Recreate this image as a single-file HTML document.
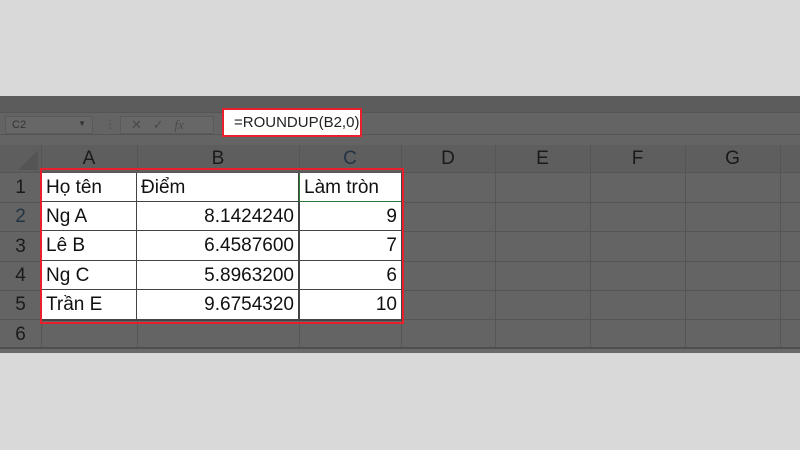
<!DOCTYPE html><html><head><style>
body{margin:0;width:800px;height:450px;background:#d9d9d9;position:relative;overflow:hidden;font-family:"Liberation Sans",sans-serif}
div{position:absolute;box-sizing:border-box}
.hl{color:#1a1a1a;font-size:19px;text-align:center}
.c{background:#fff;font-size:19px;color:#111;line-height:29px;padding:0 4px}
.r{text-align:right}
.vl{width:1px;background:#555;top:145px;height:203px}
.hz{height:1px;background:#555;left:0;width:800px}
</style></head><body>
<div style="left:0;top:96px;width:800px;height:257px;background:#646464"></div>
<div style="left:0;top:96px;width:800px;height:16px;background:#5c5c5c"></div>
<div style="left:0;top:112px;width:800px;height:1px;background:#555"></div>
<div style="left:0;top:134px;width:800px;height:1px;background:#555"></div>
<div style="left:0;top:145px;width:800px;height:27px;background:#5e5e5e"></div>
<div style="left:5px;top:116px;width:88px;height:18px;border:1px solid #5a5a5a;background:#676767;font-size:11px;color:#333;padding:2px 6px">C2<span style="position:absolute;right:6px;font-size:8px">▼</span></div>
<div style="left:104px;top:117px;font-size:12px;color:#4a4a4a">⋮</div>
<div style="left:120px;top:116px;width:94px;height:18px;border:1px solid #5a5a5a;background:#676767;font-size:13px;color:#4a4a4a;padding:0 10px">✕ &nbsp;&nbsp;✓ &nbsp;&nbsp;<i style="font-family:'Liberation Serif'">fx</i></div>
<div style="left:18px;top:150px;width:0;height:0;border-left:20px solid transparent;border-bottom:20px solid #555"></div>
<div class="hl" style="left:41px;top:148px;width:96px">A</div>
<div class="hl" style="left:137px;top:148px;width:162px">B</div>
<div class="hl" style="left:299px;top:148px;width:102px;color:#234">C</div>
<div class="hl" style="left:401px;top:148px;width:94px">D</div>
<div class="hl" style="left:495px;top:148px;width:95px">E</div>
<div class="hl" style="left:590px;top:148px;width:95px">F</div>
<div class="hl" style="left:685px;top:148px;width:95px">G</div>
<div class="vl" style="left:41px"></div><div class="vl" style="left:137px"></div><div class="vl" style="left:299px"></div><div class="vl" style="left:401px"></div><div class="vl" style="left:495px"></div><div class="vl" style="left:590px"></div><div class="vl" style="left:685px"></div><div class="vl" style="left:780px"></div>
<div class="hz" style="top:172px"></div><div class="hz" style="top:202px"></div><div class="hz" style="top:231px"></div><div class="hz" style="top:261px"></div><div class="hz" style="top:290px"></div><div class="hz" style="top:319px"></div><div class="hz" style="top:347px;background:#4e4e4e;height:2px"></div>
<div style="left:0;top:349px;width:800px;height:4px;background:#6a6a6a"></div>
<div class="hl" style="left:0;top:177px;width:41px">1</div>
<div class="hl" style="left:0;top:206px;width:41px;color:#234">2</div>
<div class="hl" style="left:0;top:236px;width:41px">3</div>
<div class="hl" style="left:0;top:265px;width:41px">4</div>
<div class="hl" style="left:0;top:294px;width:41px">5</div>
<div class="hl" style="left:0;top:324px;width:41px">6</div>
<div style="left:42px;top:173px;width:360px;height:148px;background:#444"></div>
<div class="c" style="left:42px;top:173px;width:94px;height:28px">Họ tên</div>
<div class="c" style="left:137px;top:173px;width:161px;height:28px">Điểm</div>
<div class="c" style="left:299px;top:173px;width:102px;height:29px;border-left:1px solid #2b7a3b;border-bottom:1px solid #2b7a3b;padding-left:4px">Làm tròn</div>
<div class="c" style="left:42px;top:202px;width:94px;height:28px">Ng A</div>
<div class="c r" style="left:137px;top:202px;width:161px;height:28px">8.1424240</div>
<div class="c r" style="left:300px;top:202px;width:101px;height:28px">9</div>
<div class="c" style="left:42px;top:231px;width:94px;height:29px">Lê B</div>
<div class="c r" style="left:137px;top:231px;width:161px;height:29px">6.4587600</div>
<div class="c r" style="left:300px;top:231px;width:101px;height:29px">7</div>
<div class="c" style="left:42px;top:261px;width:94px;height:28px">Ng C</div>
<div class="c r" style="left:137px;top:261px;width:161px;height:28px">5.8963200</div>
<div class="c r" style="left:300px;top:261px;width:101px;height:28px">6</div>
<div class="c" style="left:42px;top:290px;width:94px;height:29px">Trần E</div>
<div class="c r" style="left:137px;top:290px;width:161px;height:29px">9.6754320</div>
<div class="c r" style="left:300px;top:290px;width:101px;height:29px">10</div>
<div style="left:40px;top:168px;width:364px;height:156px;border:2px solid #e8202a"></div>
<div style="left:222px;top:108px;width:140px;height:29px;background:#fff;border:2px solid #e8202a;font-size:15px;color:#222;padding:4px 10px">=ROUNDUP(B2,0)</div>
</body></html>
